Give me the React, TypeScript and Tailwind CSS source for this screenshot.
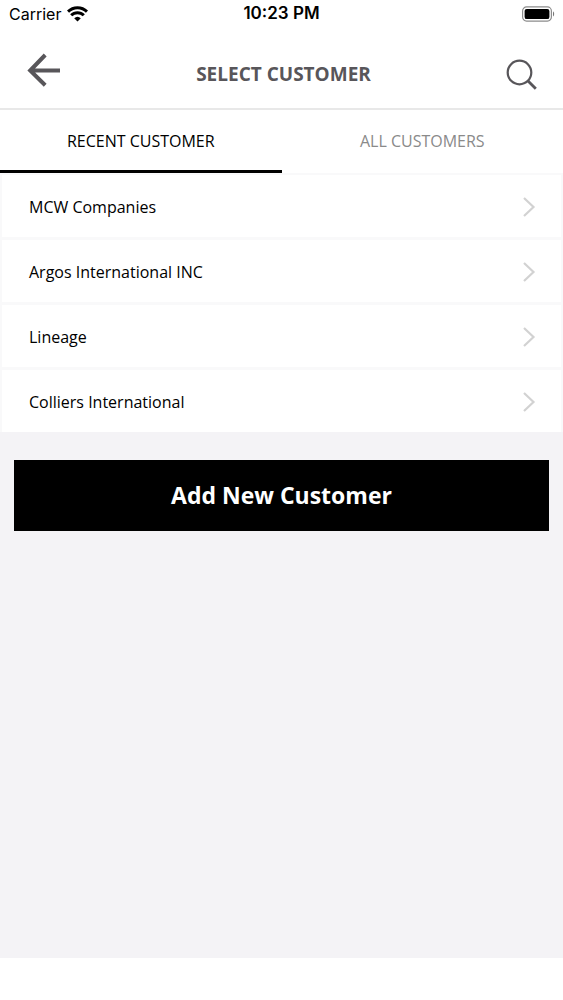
import { useState } from 'react';

const tabs = [
  { id: 'recent', label: 'RECENT CUSTOMER' },
  { id: 'all', label: 'ALL CUSTOMERS' },
];

const customers = ['MCW Companies', 'Argos International INC', 'Lineage', 'Colliers International'];

function StatusBar() {
  return (
    <div className="grid h-7 grid-cols-3 items-center px-2 font-['Inter',sans-serif] text-base text-black">
      <div className="flex items-center gap-[6px] pl-px">
        <span>Carrier</span>
        <svg width="21" height="16" viewBox="0 0 21 16" fill="none" stroke="#000" strokeWidth="3" aria-hidden="true">
          <path d="M1 5.6a13.4 13.4 0 0 1 19 0" />
          <path d="M4.200 9.300a8.800 8.800 0 0 1 12.600 0" />
          <path d="M7.200 12.200 10.500 15.500l3.300-3.300a4.800 4.800 0 0 0-6.600 0z" fill="#000" stroke="none" />
        </svg>
      </div>
      <span className="text-center text-[17px] font-semibold">10:23 PM</span>
      <svg className="justify-self-end" width="33" height="16" viewBox="0 0 33 16" aria-hidden="true">
        <rect x="0.6" y="0.9" width="28.8" height="14.2" rx="4" fill="none" stroke="#8c8c8c" strokeWidth="1.2" />
        <rect x="2.6" y="2.9" width="24.8" height="10.2" rx="2.2" fill="#000" />
        <path d="M31 5.6c1.5.5 1.5 4.300 0 4.800z" fill="#777" />
      </svg>
    </div>
  );
}

function Header() {
  return (
    <header className="flex h-[82px] items-center justify-between border-b-2 border-[#e8e8e8] px-[26px]">
      <button type="button" aria-label="Back" className="pt-1">
        <svg width="36" height="36" viewBox="0 0 36 36" fill="none" stroke="#58565a" strokeWidth="4">
          <path d="M19.200 3 4.200 18.500l15 14.700M4.200 18.500H34" />
        </svg>
      </button>
      <h1 className="pt-3 text-[19px] font-bold text-[#58565a]">SELECT CUSTOMER</h1>
      <button type="button" aria-label="Search" className="pt-3">
        <svg width="32" height="32" viewBox="0 0 32 32" fill="none" stroke="#58565a">
          <circle cx="14.500" cy="14.500" r="11.800" strokeWidth="2.200" />
          <path d="m22.800 22.800 8 8" strokeWidth="2.800" />
        </svg>
      </button>
    </header>
  );
}

export default function App() {
  const [active, setActive] = useState('recent');

  return (
    <div className="flex min-h-screen flex-col bg-white font-['Open_Sans',sans-serif]">
      <StatusBar />
      <Header />

      <div role="tablist" className="grid grid-cols-2">
        {tabs.map((tab) => (
          <button
            key={tab.id}
            type="button"
            role="tab"
            aria-selected={active === tab.id}
            onClick={() => setActive(tab.id)}
            className={`h-[63px] border-b-3 pt-[2px] text-base ${
              active === tab.id ? 'border-black text-black' : 'border-transparent text-[#8a8a8a]'
            }`}
          >
            {tab.label}
          </button>
        ))}
      </div>

      <main className="flex-1 bg-[#f4f3f6]">
        <ul className="flex flex-col gap-[3px] bg-[#f9f9fa] px-[2px] pt-[2px]">
          {customers.map((name) => (
            <li key={name}>
              <button
                type="button"
                className="flex h-[62px] w-full items-center justify-between bg-white pt-px pl-[27px] pr-6 text-left text-base text-black"
              >
                {name}
                <svg width="14" height="20" viewBox="0 0 14 20" fill="none" stroke="#d2d2d2" strokeWidth="2.200" aria-hidden="true">
                  <path d="m1 1 9.500 9L1 19" />
                </svg>
              </button>
            </li>
          ))}
        </ul>

        <div className="px-[14px] pt-7">
          <button type="button" className="h-[71px] w-full bg-black text-[23px] font-bold text-white">
            Add New Customer
          </button>
        </div>
      </main>

      <footer className="h-[42px] bg-white" />
    </div>
  );
}
